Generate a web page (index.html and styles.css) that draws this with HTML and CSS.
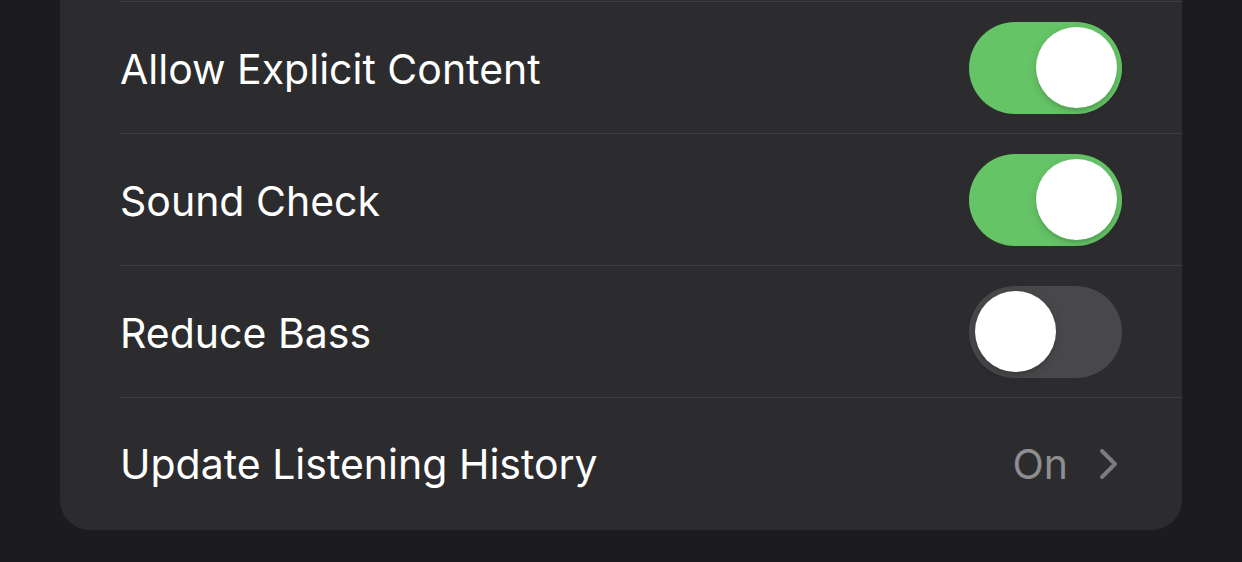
FILE: index.html
```html
<!DOCTYPE html>
<html>
<head>
<meta charset="utf-8">
<link rel="stylesheet" href="styles.css">
</head>
<body>
<div class="page">
  <div class="card">
    <div class="row">
      <span class="label">Allow Explicit Content</span>
      <div class="toggle on"><div class="knob"></div></div>
    </div>
    <div class="row">
      <span class="label">Sound Check</span>
      <div class="toggle on"><div class="knob"></div></div>
    </div>
    <div class="row">
      <span class="label">Reduce Bass</span>
      <div class="toggle"><div class="knob"></div></div>
    </div>
    <div class="row last">
      <span class="label">Update Listening History</span>
      <div class="detail">
        <span class="value">On</span>
        <svg class="chevron" width="22" height="32" viewBox="0 0 22 32"><path d="M4 3 L17 16 L4 29" fill="none" stroke="#7b7b80" stroke-width="4" stroke-linecap="round" stroke-linejoin="round"/></svg>
      </div>
    </div>
  </div>
</div>
</body>
</html>
```

FILE: styles.css
```css
html, body {
  margin: 0;
  padding: 0;
  background: #1c1c1e;
}
body {
  width: 1242px;
  height: 562px;
  overflow: hidden;
  font-family: Inter, "Noto Sans", sans-serif;
}
.page {
  padding: 0 60px;
}
.card {
  background: #2c2c2e;
  border-radius: 0 0 30px 30px;
  padding: 1px 0 1px 0;
}
.row {
  box-sizing: border-box;
  height: 132px;
  margin-left: 60px;
  padding-right: 60px;
  border-top: 1px solid #3d3d41;
  display: flex;
  align-items: center;
  justify-content: space-between;
}
.row.last .label,
.row.last .value {
  padding-top: 0;
}
.label {
  color: #ffffff;
  font-size: 41px;
  line-height: 48px;
  padding-top: 2px;
}
.toggle {
  box-sizing: border-box;
  width: 153px;
  height: 92px;
  border-radius: 46px;
  background: #48484b;
  padding: 5.5px;
  display: flex;
  justify-content: flex-start;
}
.toggle.on {
  background: #65c466;
  justify-content: flex-end;
}
.knob {
  width: 81px;
  height: 81px;
  border-radius: 50%;
  background: #ffffff;
  box-shadow: 0 3px 8px rgba(0, 0, 0, 0.15), 0 3px 1px rgba(0, 0, 0, 0.06);
}
.detail {
  display: flex;
  align-items: center;
  gap: 30px;
}
.value {
  color: #8d8d92;
  font-size: 41px;
  line-height: 48px;
  padding-top: 2px;
}
.chevron {
  display: block;
  margin-right: 2px;
}
```
